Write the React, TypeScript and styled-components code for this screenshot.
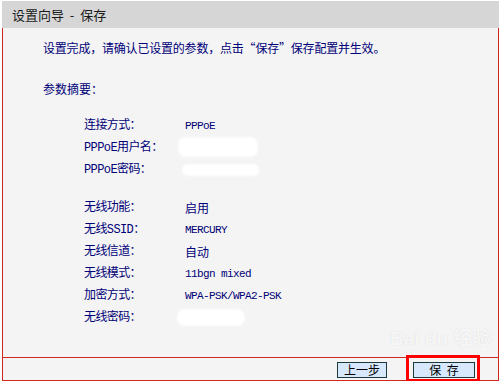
import styled, { createGlobalStyle } from "styled-components";

const GlobalStyle = createGlobalStyle`
  html, body {
    margin: 0;
    padding: 0;
    background: #ffffff;
  }
  body {
    font-family: "Noto Sans CJK SC", "Liberation Sans", sans-serif;
  }
`;

const Frame = styled.div`
  position: relative;
  margin: 1px 0 0 2px;
  width: 497px;
  height: 380px;
  display: flex;
  flex-direction: column;
`;

const Header = styled.div`
  height: 27px;
  background: #d6d6d6;
  display: flex;
  align-items: center;
  padding-left: 10px;
  font-size: 13px;
  color: #1a1a1a;
  white-space: pre;
`;

const Body = styled.div`
  flex: 1;
  background: #f4f4f4;
  border-left: 1px solid #d0281e;
  border-right: 1px solid #d0281e;
  padding: 9px 0 0 40px;
  color: #000078;
  font-size: 12px;
  line-height: 22px;
`;

const Intro = styled.div`
  letter-spacing: -0.2px;
`;

const Summary = styled.div`
  margin-top: 19px;
`;

const Group = styled.div<{ $top: number }>`
  display: grid;
  grid-template-columns: 101px 1fr;
  grid-auto-rows: 22px;
  margin: ${(p) => p.$top}px 0 0 41px;
`;

const Label = styled.div`
  font-family: "Liberation Mono", "Noto Sans CJK SC", monospace;
  font-size: 12px;
  letter-spacing: -0.6px;
`;

const Value = styled.div<{ $mono?: boolean }>`
  position: relative;
  font-family: ${(p) =>
    p.$mono
      ? `"Liberation Mono", "Noto Sans CJK SC", monospace`
      : `"Noto Sans CJK SC", sans-serif`};
  font-size: ${(p) => (p.$mono ? "11px" : "12px")};
  letter-spacing: ${(p) => (p.$mono ? "-0.6px" : "0")};
`;

const Blot = styled.span<{ $w: number; $h: number; $x: number; $y: number }>`
  position: absolute;
  left: ${(p) => p.$x}px;
  top: ${(p) => p.$y}px;
  width: ${(p) => p.$w}px;
  height: ${(p) => p.$h}px;
  background: #ffffff;
  border-radius: 8px;
  filter: blur(1px);
`;

const Footer = styled.div`
  height: 18px;
  background: #f4f4f4;
  border: 1px solid #d0281e;
  display: flex;
  justify-content: flex-end;
  align-items: flex-start;
  padding: 4px 23px 0 0;
  gap: 26px;
`;

const Button = styled.button<{ $w: number }>`
  width: ${(p) => p.$w}px;
  height: 16px;
  padding: 0;
  display: flex;
  align-items: center;
  justify-content: center;
  overflow: visible;
  background: #d8e8fc;
  border: 1px solid #1d3a3a;
  font-family: "Noto Sans CJK SC", sans-serif;
  font-size: 12px;
  line-height: 12px;
  color: #000000;
  white-space: pre;
  cursor: pointer;
`;

const Highlight = styled.div`
  position: relative;

  &::after {
    content: "";
    position: absolute;
    left: -7px;
    top: -7px;
    right: -5px;
    bottom: -4px;
    border: 3px solid #ff0000;
    pointer-events: none;
  }
`;

const Watermark = styled.div`
  position: absolute;
  left: 388px;
  top: 328px;
  color: rgba(255, 255, 255, 0.8);
  text-shadow: 0 0 1px rgba(170, 170, 170, 0.45);
  font-family: "Liberation Sans", "Noto Sans CJK SC", sans-serif;
  font-size: 19px;
  font-weight: bold;
  line-height: 20px;
  pointer-events: none;
`;

type Row = { label: string; value: string; mono?: boolean; blot?: [number, number, number, number] };

const firstRows: Row[] = [
  { label: "连接方式：", value: "PPPoE", mono: true },
  { label: "PPPoE用户名：", value: "", blot: [80, 20, -7, 0] },
  { label: "PPPoE密码：", value: "", blot: [77, 12, -3, 5] },
];

const secondRows: Row[] = [
  { label: "无线功能：", value: "启用" },
  { label: "无线SSID：", value: "MERCURY", mono: true },
  { label: "无线信道：", value: "自动" },
  { label: "无线模式：", value: "11bgn mixed", mono: true },
  { label: "加密方式：", value: "WPA-PSK/WPA2-PSK", mono: true },
  { label: "无线密码：", value: "", blot: [68, 17, -8, 2] },
];

const renderRows = (rows: Row[]) =>
  rows.flatMap((r) => [
    <Label key={r.label}>{r.label}</Label>,
    <Value key={r.label + "-v"} $mono={r.mono}>
      {r.value}
      {r.blot && <Blot $w={r.blot[0]} $h={r.blot[1]} $x={r.blot[2]} $y={r.blot[3]} />}
    </Value>,
  ]);

const App = () => {
  return (
    <>
      <GlobalStyle />
      <Frame>
        <Header>设置向导  -  保存</Header>
        <Body>
          <Intro>设置完成，请确认已设置的参数，点击“保存”保存配置并生效。</Intro>
          <Summary>参数摘要：</Summary>
          <Group $top={15}>{renderRows(firstRows)}</Group>
          <Group $top={16}>{renderRows(secondRows)}</Group>
        </Body>
        <Footer>
          <Button $w={50}>上一步</Button>
          <Highlight>
            <Button $w={62}>保  存</Button>
          </Highlight>
        </Footer>
        <Watermark>Bai du 经验</Watermark>
      </Frame>
    </>
  );
};

export default App;
